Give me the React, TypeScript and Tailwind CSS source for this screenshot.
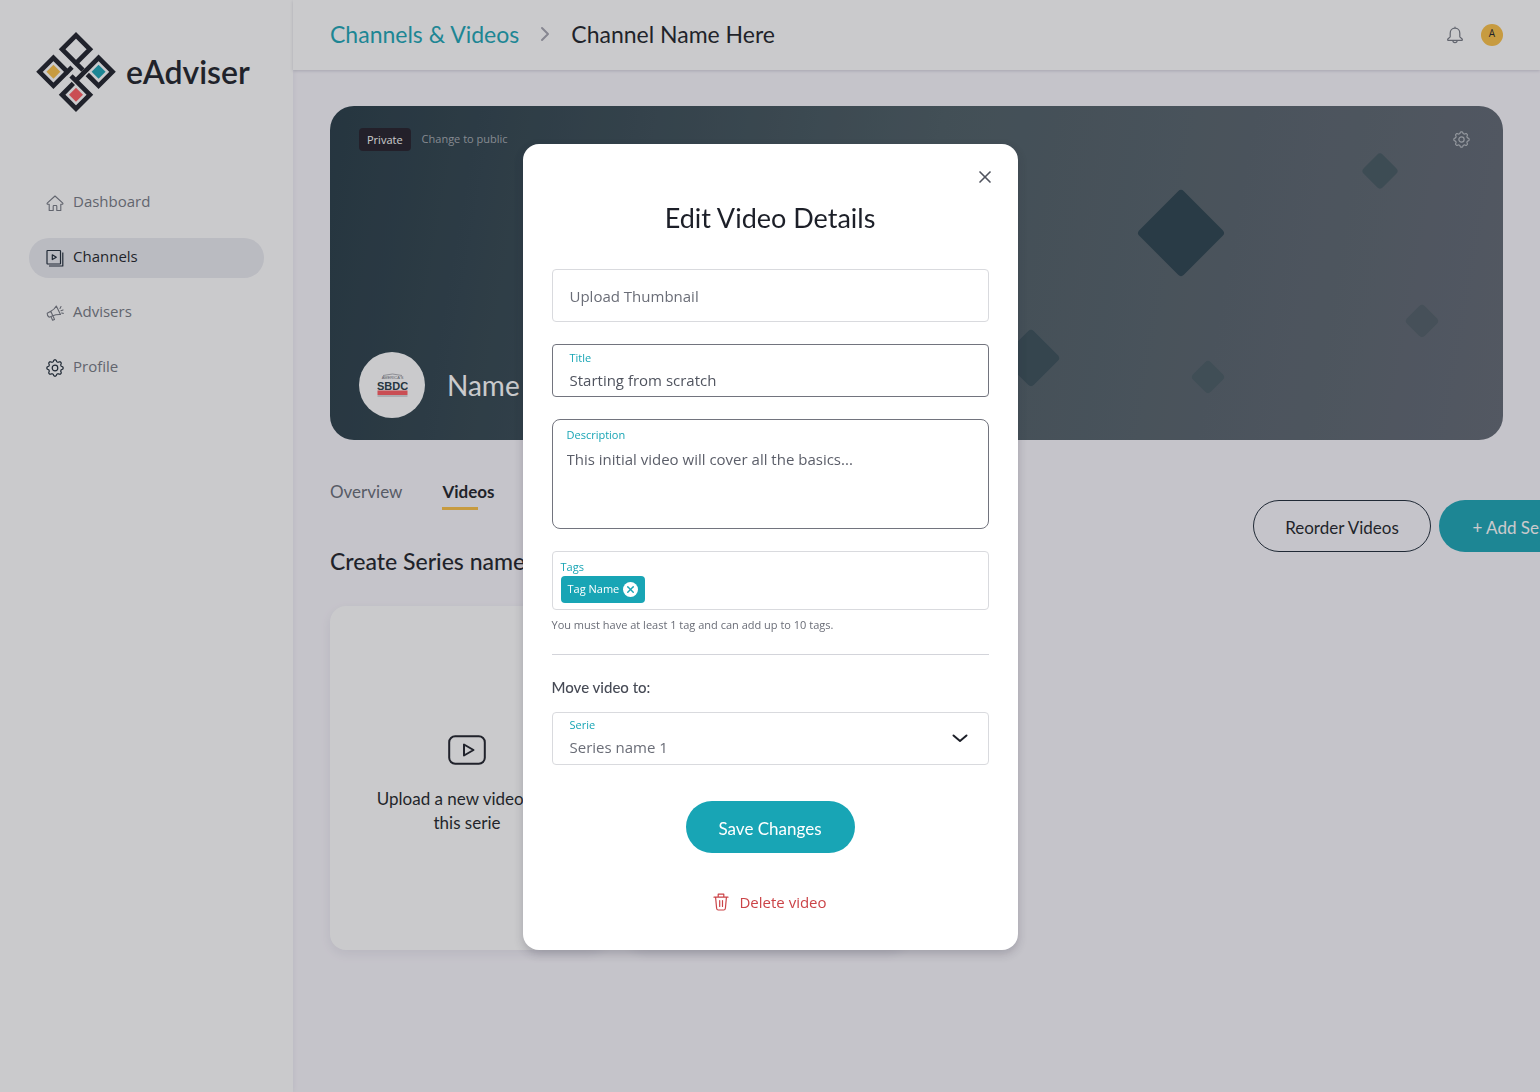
import { useState, type ReactNode } from 'react';
import { X, ChevronRight } from 'lucide-react';

const NAV_ITEMS = [
  { label: 'Dashboard', icon: <HomeIcon /> },
  { label: 'Channels', icon: <ChannelsIcon />, active: true },
  { label: 'Advisers', icon: <MegaphoneIcon /> },
  { label: 'Profile', icon: <GearIcon size={18} className="text-[#1c2936]" /> },
];

export default function App() {
  const [open, setOpen] = useState(true);

  return (
    <div className="flex min-h-screen overflow-hidden bg-[#f9f7fd] font-['Open_Sans',sans-serif] text-[#1c1f28]">
      <Sidebar />
      <div className="flex min-w-0 flex-1 flex-col">
        <Header />
        <main className="px-[37px] pt-9">
          <Banner />
          <Toolbar />
          <div className="mt-[29px] flex gap-[26px]">
            <button
              type="button"
              className="flex h-[344px] w-[274px] flex-col items-center rounded-2xl bg-white pt-[129px] shadow-[0_4px_12px_rgba(30,30,60,0.08)]"
            >
              <VideoIcon />
              <span className="mt-[22px] font-['Lato',sans-serif] text-[17px] leading-6">
                Upload a new video into
                <br />
                this serie
              </span>
            </button>
            <div className="h-[344px] w-[274px] rounded-2xl bg-white shadow-[0_4px_12px_rgba(30,30,60,0.08)]" />
          </div>
        </main>
      </div>
      {open && <EditVideoDialog onClose={() => setOpen(false)} />}
    </div>
  );
}

function Sidebar() {
  return (
    <aside className="w-[293px] shrink-0 bg-white px-[29px] pt-8 shadow-[0_0_6px_rgba(30,30,60,0.08)]">
      <a href="#" className="flex items-center gap-[10px] pl-[7px]">
        <Logo />
        <span className="font-['Lato',sans-serif] text-[32px] font-semibold leading-10">eAdviser</span>
      </a>
      <nav className="mt-[71px] flex flex-col gap-[15px]">
        {NAV_ITEMS.map((item) => (
          <a
            key={item.label}
            href="#"
            className={`flex h-10 items-center gap-[9px] rounded-full px-[17px] text-[15px] ${
              item.active ? 'bg-[#eaebf1] text-[#1c1f28]' : 'text-[#747882]'
            }`}
          >
            {item.icon}
            <span className="pb-[3px]">{item.label}</span>
          </a>
        ))}
      </nav>
    </aside>
  );
}

function Header() {
  return (
    <header className="flex h-[70px] items-center justify-between bg-white px-[37px] shadow-[0_1px_3px_rgba(30,30,60,0.18)]">
      <nav
        aria-label="Breadcrumb"
        className="flex items-center gap-[14px] pb-[2px] font-['Lato',sans-serif] text-[23px]"
      >
        <a href="#" className="text-[#18a5b5]">
          Channels &amp; Videos
        </a>
        <ChevronRight size={24} strokeWidth={2} className="text-[#a5a5b0]" />
        <span>Channel Name Here</span>
      </nav>
      <div className="flex items-center gap-[17px]">
        <button type="button" aria-label="Notifications">
          <BellIcon />
        </button>
        <button
          type="button"
          aria-label="Account"
          className="size-[22px] rounded-full bg-[#fbc045] pb-1 text-[10px] leading-4"
        >
          A
        </button>
      </div>
    </header>
  );
}

function Banner() {
  return (
    <section className="relative flex min-h-[334px] flex-col justify-between overflow-hidden rounded-3xl bg-linear-100 from-[#243944] via-[#4a5b62] to-[#606772] px-[29px] py-[22px]">
      <svg className="absolute top-0 right-0" width="500" height="334" viewBox="0 0 500 334">
        <Diamond x={178} y={127} side={63} fill="#28404c" />
        <Diamond x={377} y={65} side={27} fill="#43575f" />
        <Diamond x={419} y={215} side={25} fill="#4f5d66" />
        <Diamond x={28} y={252} side={42} fill="#384e57" />
        <Diamond x={205} y={271} side={25} fill="#475a62" />
      </svg>
      <div className="relative flex items-center justify-between">
        <div className="flex items-center gap-[11px] text-[11px]">
          <span className="rounded bg-[#201d27] px-2 leading-[23px] text-white">Private</span>
          <button type="button" className="text-[#a4aab0]">
            Change to public
          </button>
        </div>
        <button type="button" aria-label="Channel settings" className="pr-1">
          <GearIcon size={17} className="text-[#b9bec4]" />
        </button>
      </div>
      <div className="relative flex items-center gap-[22px]">
        <div className="flex size-[66px] items-center justify-center rounded-full bg-white">
          <SbdcLogo />
        </div>
        <span className="font-['Lato',sans-serif] text-[28px] text-white">Name</span>
      </div>
    </section>
  );
}

function Toolbar() {
  return (
    <div className="flex justify-between pt-10 font-['Lato',sans-serif]">
      <div>
        <div role="tablist" className="flex gap-10 text-[17px] leading-6">
          <button type="button" role="tab" aria-selected="false" className="self-start text-[#666b76]">
            Overview
          </button>
          <button type="button" role="tab" aria-selected="true" className="font-bold">
            Videos
            <span className="mt-[3px] block h-[3px] w-9 bg-[#fbc045]" />
          </button>
        </div>
        <h2 className="mt-[35px] text-[23px] font-medium leading-8">Create Series name</h2>
      </div>
      {/* action buttons run past the right edge */}
      <div className="-mr-24 mt-5 flex h-[52px] gap-2 text-[17px]">
        <button type="button" className="w-[178px] rounded-full border border-[#1c2936] pt-1">
          Reorder Videos
        </button>
        <button type="button" className="w-[160px] rounded-full bg-[#18a5b5] pt-1 text-white">
          + Add Series
        </button>
      </div>
    </div>
  );
}

function EditVideoDialog({ onClose }: { onClose: () => void }) {
  return (
    <div className="fixed inset-0 flex items-center justify-center bg-[#2b2b33]/25 pt-[2px]">
      <div
        role="dialog"
        aria-modal="true"
        aria-labelledby="dialog-title"
        className="relative w-[495px] rounded-2xl bg-white px-[29px] pt-[54px] pb-9 shadow-[0_4px_10px_rgba(30,30,50,0.22)]"
      >
        <button
          type="button"
          aria-label="Close"
          onClick={onClose}
          className="absolute top-[23px] right-[23px] text-[#50545f]"
        >
          <X size={20} strokeWidth={2} />
        </button>
        <h1
          id="dialog-title"
          className="text-center font-['Lato',sans-serif] text-[27px] leading-10"
        >
          Edit Video Details
        </h1>

        <form className="mt-[31px] flex flex-col" onSubmit={(e) => e.preventDefault()}>
          <div className="flex flex-col gap-[22px]">
            <label className="flex h-[53px] cursor-pointer items-center rounded border border-[#d9dade] px-[17px] pt-[2px] text-[15px] text-[#6a6d77]">
              Upload Thumbnail
              <input type="file" accept="image/*" className="sr-only" />
            </label>

            <Field id="title" label="Title" className="h-[53px] rounded border-[#72747e] px-[17px] pt-[5px]">
              <input
                id="title"
                defaultValue="Starting from scratch"
                className="block w-full text-[15px] leading-7 text-[#50545f] outline-none"
              />
            </Field>

            <Field
              id="description"
              label="Description"
              className="h-[110px] rounded-lg border-[#72747e] px-[14px] pt-[7px]"
            >
              <textarea
                id="description"
                defaultValue="This initial video will cover all the basics..."
                className="mt-1 block h-[72px] w-full resize-none text-[15px] leading-6 text-[#5b5e69] outline-none"
              />
            </Field>

            <Field id="tags" label="Tags" className="h-[59px] rounded border-[#d9dade] px-2 pt-[7px]">
              <div className="mt-px flex gap-2">
                <span className="flex h-[27px] shrink-0 items-center gap-1 rounded bg-[#18a5b5] px-[7px] text-[11px] text-white">
                  Tag Name
                  <button
                    type="button"
                    aria-label="Remove Tag Name"
                    className="flex size-[15px] items-center justify-center rounded-full bg-white text-[#18a5b5]"
                  >
                    <X size={11} strokeWidth={3} />
                  </button>
                </span>
                <input id="tags" className="min-w-0 flex-1 text-[11px] outline-none" />
              </div>
            </Field>
          </div>

          <p className="mt-[7px] text-[11px] leading-4 text-[#6a6d77]">
            You must have at least 1 tag and can add up to 10 tags.
          </p>
          <hr className="mt-[21px] border-[#d3d4da]" />
          <p className="mt-5 font-['Lato',sans-serif] text-[15px] font-medium leading-6 text-[#464a55]">
            Move video to:
          </p>

          <div className="relative mt-[13px]">
            <label htmlFor="serie" className="absolute top-[5px] left-[18px] text-[11px] leading-4 text-[#18a5b5]">
              Serie
            </label>
            <select
              id="serie"
              className="block h-[53px] w-full appearance-none rounded border border-[#d9dade] bg-transparent px-[17px] pt-[18px] text-[15px] text-[#6a6d77]"
            >
              <option>Series name 1</option>
            </select>
            <svg
              className="pointer-events-none absolute top-[22px] right-[21px]"
              width="16"
              height="9"
              viewBox="0 0 16 9"
              fill="none"
              stroke="#1c1f28"
              strokeWidth="2"
              strokeLinecap="round"
              strokeLinejoin="round"
            >
              <path d="M1.5 1.5 8 7l6.5-5.5" />
            </svg>
          </div>

          <button
            type="submit"
            className="mt-9 h-[52px] w-[169px] self-center rounded-full bg-[#18a5b5] pt-1 font-['Lato',sans-serif] text-[17px] text-white"
          >
            Save Changes
          </button>
          <button
            type="button"
            className="mt-[37px] flex items-center gap-[10px] self-center text-[15px] leading-6 text-[#cb4347]"
          >
            <TrashIcon />
            Delete video
          </button>
        </form>
      </div>
    </div>
  );
}

function Field({
  id,
  label,
  className,
  children,
}: {
  id: string;
  label: string;
  className: string;
  children: ReactNode;
}) {
  return (
    <div className={`border ${className}`}>
      <label htmlFor={id} className="block text-[11px] leading-4 text-[#18a5b5]">
        {label}
      </label>
      {children}
    </div>
  );
}

function Diamond({ x, y, side, fill }: { x: number; y: number; side: number; fill: string }) {
  return (
    <rect
      x={x - side / 2}
      y={y - side / 2}
      width={side}
      height={side}
      rx="4"
      fill={fill}
      transform={`rotate(45 ${x} ${y})`}
    />
  );
}

function Logo() {
  return (
    <svg width="80" height="80" viewBox="109 96 240 241" fill="none" stroke="#1c1f28" strokeWidth="14">
      <path d="M250 211 187 148l42-42 42 42-47 47" />
      <path d="M217 202l-56 56-42-42 42-42 47 47" />
      <path d="M263 224l34 34 42-42-42-42-72 72" />
      <path d="M214 228l57 57-42 42-42-42 34-34" />
      <g stroke="none">
        <path fill="#fbc045" d="M161 195l21 21-21 21-21-21z" />
        <path fill="#18a5b5" d="M297 195l21 21-21 21-21-21z" />
        <path fill="#ff5a5f" d="M229 264l21 21-21 21-21-21z" />
      </g>
    </svg>
  );
}

function SbdcLogo() {
  return (
    <svg
      width="31"
      height="24"
      viewBox="0 0 31 24"
      fontFamily="Liberation Sans, sans-serif"
      textAnchor="middle"
    >
      <path d="M6 2.500Q15.500-.5 25 2.500" fill="none" stroke="#8a8d95" strokeWidth=".7" />
      <text x="15.500" y="5.800" fontSize="4" fill="#6a6d77">
        AMERICA'S
      </text>
      <text x="15.500" y="17" fontSize="11" fontWeight="700" fill="#243944">
        SBDC
      </text>
      <path d="M.5 17.500h30V22H.5z" fill="#ff5a5f" />
      <path d="M.5 23h30" stroke="#9a9ca5" strokeWidth=".8" />
    </svg>
  );
}

// eight-toothed outline, sampled every 5 degrees
const GEAR_POINTS = Array.from({ length: 72 }, (_, i) => {
  const angle = (i * 5 * Math.PI) / 180;
  const tooth = Math.max(-0.9, Math.min(0.8, 1.4 * Math.cos(8 * angle)));
  const r = 7.3 + tooth;
  return `${(9 + r * Math.cos(angle)).toFixed(2)},${(9 + r * Math.sin(angle)).toFixed(2)}`;
}).join(' ');

function GearIcon({ size, className }: { size: number; className: string }) {
  return (
    <svg
      width={size}
      height={size}
      viewBox="0 0 18 18"
      fill="none"
      stroke="currentColor"
      strokeWidth="1.2"
      strokeLinejoin="round"
      className={className}
    >
      <polygon points={GEAR_POINTS} />
      <circle cx="9" cy="9" r="2.800" />
    </svg>
  );
}

function HomeIcon() {
  return (
    <svg width="18" height="18" viewBox="0 0 18 18" fill="none" stroke="currentColor" strokeWidth="1.1" strokeLinejoin="round">
      <path d="M9 2 1.200 9.200q-.5.8.4 1h1.600v6.300h4v-4.300q0-.7.7-.7h2.200q.7 0 .7.7v4.300h4v-6.300h1.600q.9-.2.4-1z" />
    </svg>
  );
}

function ChannelsIcon() {
  return (
    <svg width="18" height="18" viewBox="0 0 18 18" fill="none" stroke="#1c2936" strokeWidth="1.2" strokeLinejoin="round">
      <rect x="1" y="1.500" width="13.500" height="13.500" rx=".5" />
      <path d="M3 17h13.800V3.500M6.300 5.800v4.800l4-2.400z" />
    </svg>
  );
}

function MegaphoneIcon() {
  return (
    <svg
      width="18"
      height="18"
      viewBox="0 0 18 18"
      fill="none"
      stroke="currentColor"
      strokeWidth="1.1"
      strokeLinecap="round"
      strokeLinejoin="round"
    >
      <path d="M1.200 9.200 4.800 7.200Q8.500 5.500 10.300 2l4.200 8.500Q10 10.300 6.800 11.800L3.200 13.200Q1 12 1.200 9.200zM4.800 7.200l2 4.600M5 12.600l1.600 3.600 1.900-.8-1.500-3.400M14 4.500l1-2M15 6.800l2-.9M15.600 9l1.700.4" />
    </svg>
  );
}

function BellIcon() {
  return (
    <svg width="18" height="18" viewBox="0 0 18 18" fill="none" stroke="#747882" strokeWidth="1.2" strokeLinecap="round" strokeLinejoin="round">
      <path d="M9 1v1M9 2.200c-3 0-4.800 2.300-4.800 5v3.600c0 1-2.600 1.700-2.600 2.900 0 .5.300.6.700.6h13.400c.4 0 .7-.1.700-.6 0-1.200-2.600-1.900-2.600-2.900V7.200c0-2.700-1.800-5-4.800-5zM6.900 14.500a2.100 2.100 0 0 0 4.200 0" />
    </svg>
  );
}

function VideoIcon() {
  return (
    <svg width="38" height="30" viewBox="0 0 38 30" fill="none" stroke="#1c1f28" strokeWidth="2" strokeLinejoin="round">
      <rect x="1.200" y="1.200" width="35.600" height="27.600" rx="6" />
      <path d="M16 9.500v11l9.500-5.500z" />
    </svg>
  );
}

function TrashIcon() {
  return (
    <svg width="16" height="18" viewBox="0 0 16 18" fill="none" stroke="currentColor" strokeWidth="1.2" strokeLinecap="round" strokeLinejoin="round">
      <path d="M1 4.200h14M5.200 4V1.200h5.600V4M2.600 4.500l1 10.800q.2 1.700 1.700 1.700h5.400q1.500 0 1.700-1.700l1-10.800M6.700 7.500v6M9.500 7.500v6" />
    </svg>
  );
}
